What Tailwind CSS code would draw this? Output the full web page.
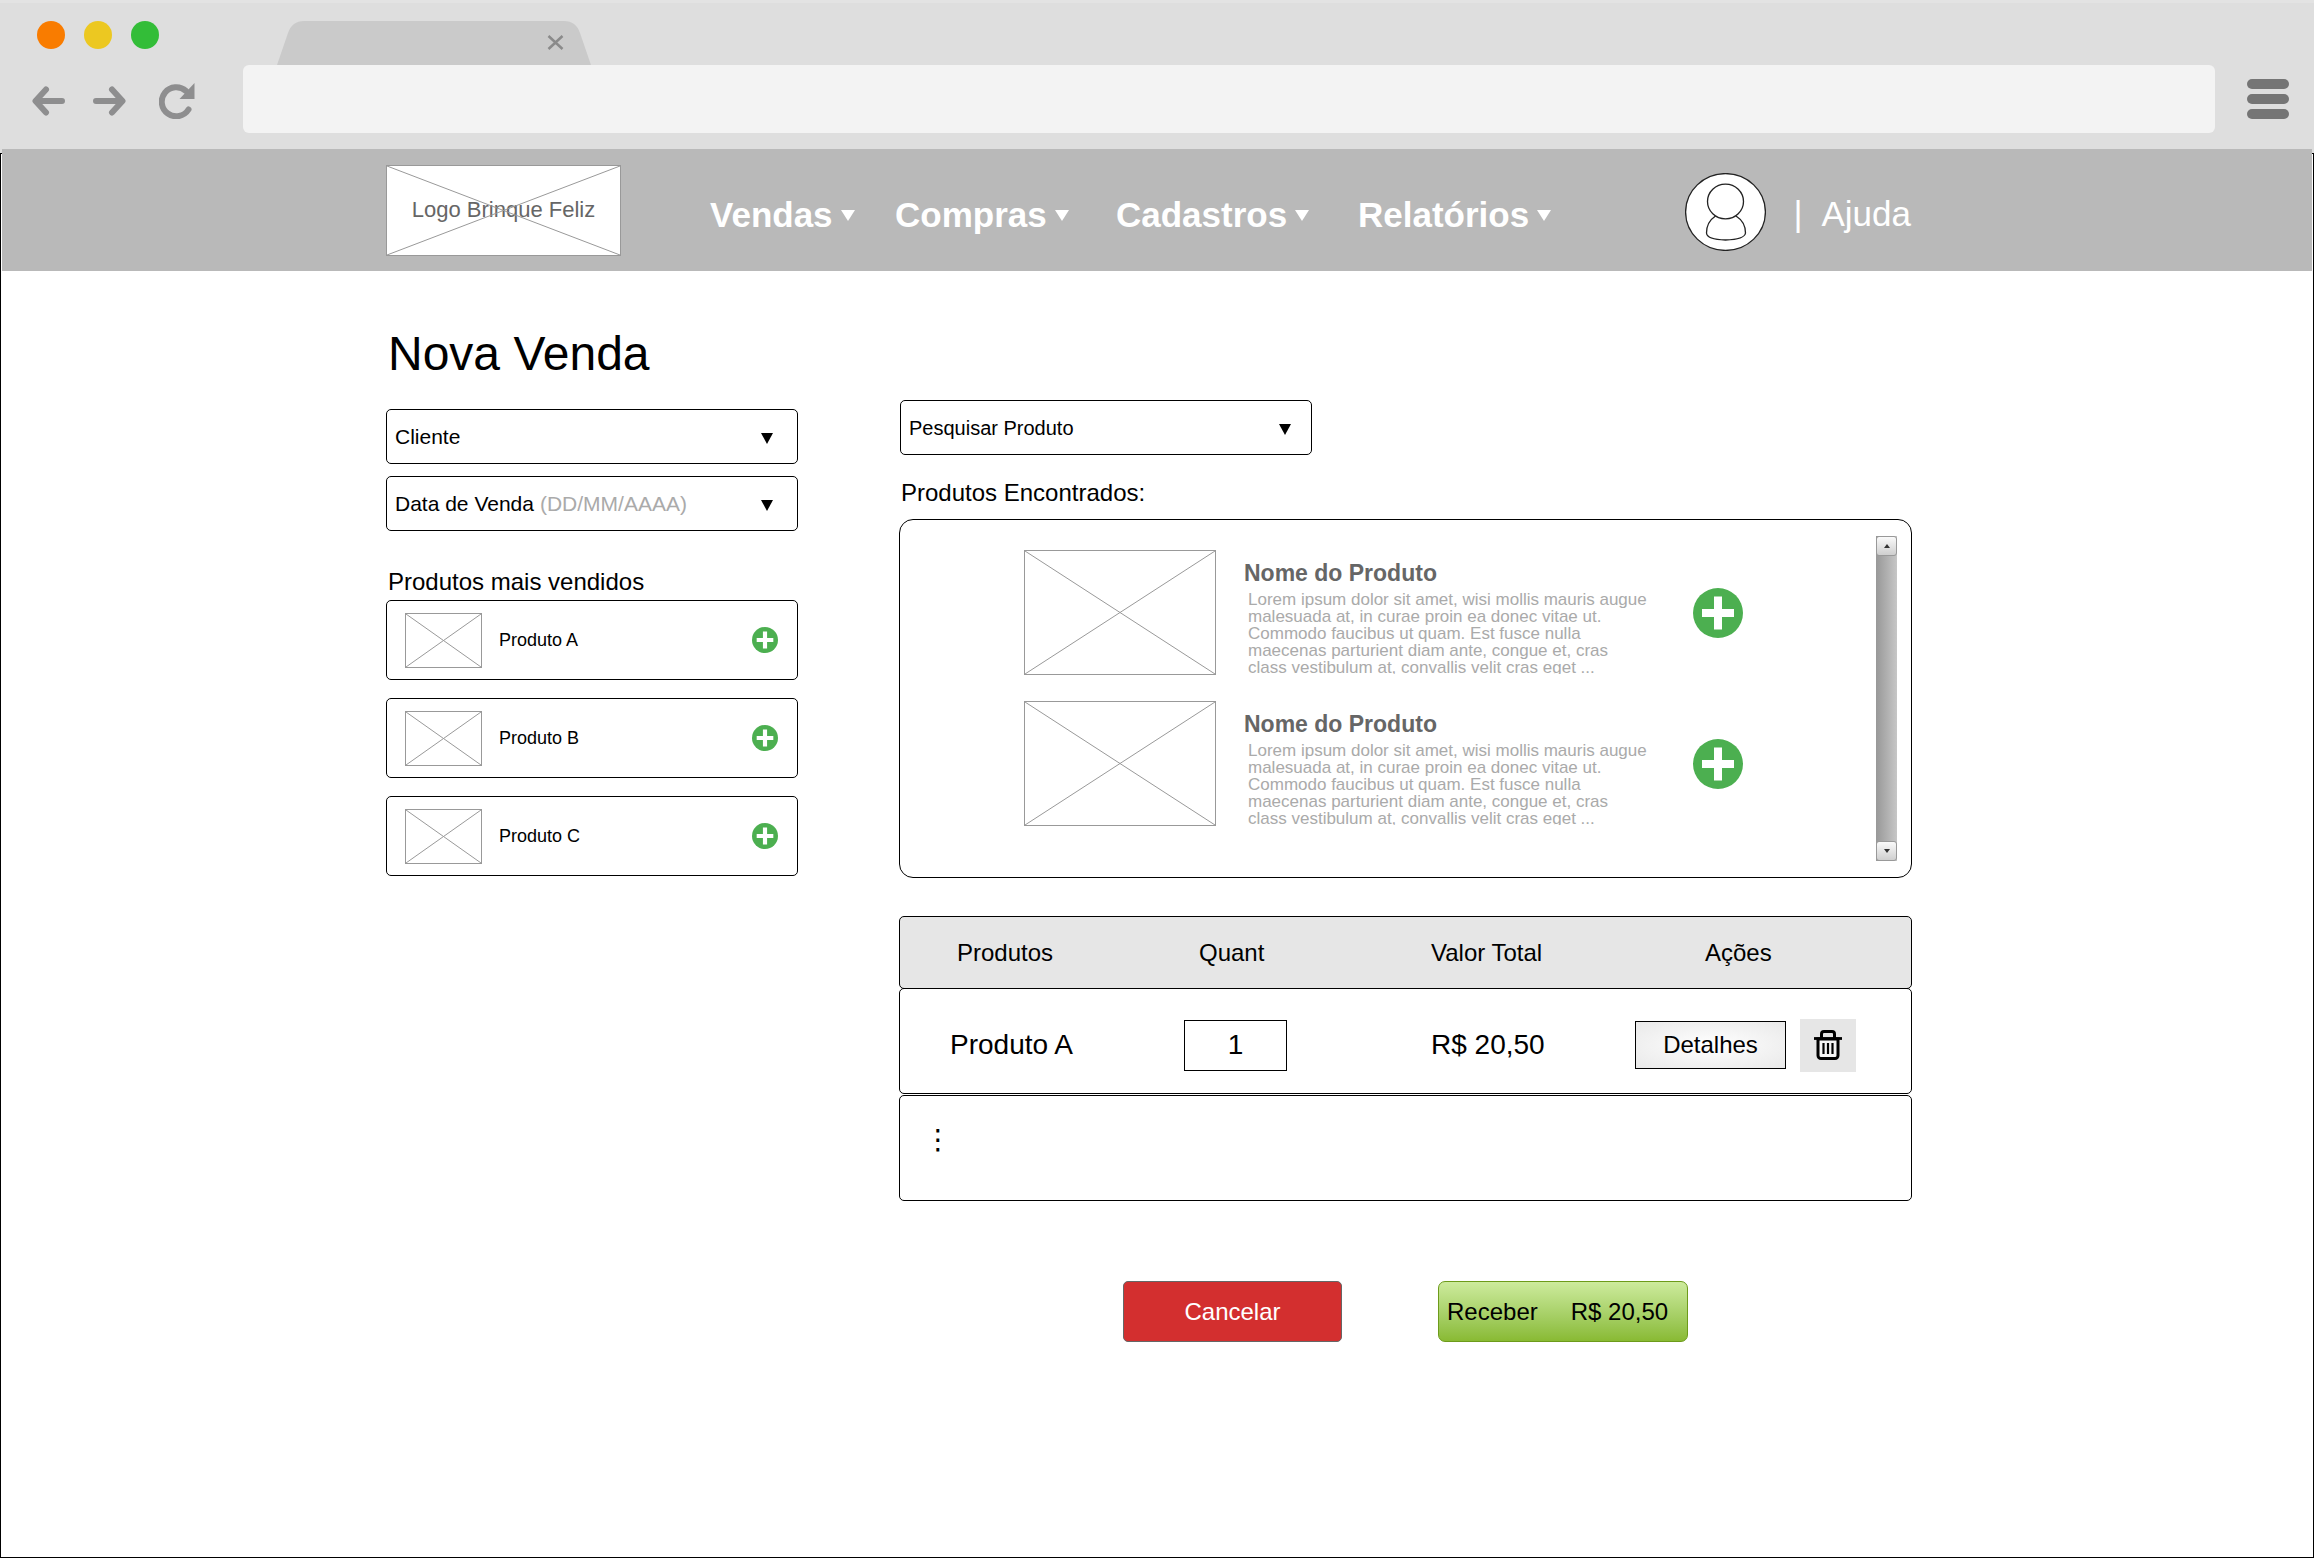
<!DOCTYPE html>
<html lang="pt-BR">
<head>
<meta charset="utf-8">
<meta name="viewport" content="width=device-width, initial-scale=1">
<title>Nova Venda</title>
<script src="https://cdn.jsdelivr.net/npm/@tailwindcss/browser@4"></script>
</head>
<body class="flex min-h-screen flex-col bg-white pr-px pb-px font-['Liberation_Sans',Arial,sans-serif] text-black">

<!-- Shared symbols -->
<svg class="hidden" aria-hidden="true">
  <symbol id="plus" viewBox="0 0 50 50">
    <circle cx="25" cy="25" r="25" fill="#4caf50"/>
    <path d="M25 8.500v33M9 25h32" stroke="#fff" stroke-width="8" fill="none"/>
  </symbol>
  <symbol id="caret" viewBox="0 0 12 11" preserveAspectRatio="none">
    <path d="M0 0h12L6 11z" fill="currentColor"/>
  </symbol>
</svg>

<!-- Browser bar -->
<div class="h-[153px] border-t-3 border-[#e3e3e3] bg-[#dedede]">
  <div class="flex h-[62px] items-start pt-[18px] pl-[37px]">
    <div class="flex gap-[19px]">
      <span class="size-7 rounded-full bg-[#f97c00]"></span>
      <span class="size-7 rounded-full bg-[#ecc821]"></span>
      <span class="size-7 rounded-full bg-[#33bd38]"></span>
    </div>
    <svg class="ml-[118px] h-[44px] w-[314px]" viewBox="0 0 314 44" aria-hidden="true">
      <path d="M0 44L11 12Q15 0 27 0H287Q299 0 303 12L314 44z" fill="#cacaca"/>
      <path d="M271.500 15l14 13M285.500 15l-14 13" stroke="#8a8a8a" stroke-width="2.500" fill="none"/>
    </svg>
  </div>
  <div class="flex items-center pr-[25px] pl-8">
    <div class="flex items-center gap-7 pt-1 text-[#8e8e8f]">
      <button type="button" aria-label="Voltar">
        <svg class="h-[30px] w-[33px]" viewBox="0 0 33 30" fill="none" stroke="currentColor" stroke-width="6" stroke-linecap="round" stroke-linejoin="round"><path d="M30 15H4M14 3.500L3.500 15L14 26.500"/></svg>
      </button>
      <button type="button" aria-label="Avançar">
        <svg class="h-[30px] w-[33px]" viewBox="0 0 33 30" fill="none" stroke="currentColor" stroke-width="6" stroke-linecap="round" stroke-linejoin="round"><path d="M3 15h26M19 3.500L29.500 15L19 26.500"/></svg>
      </button>
      <button type="button" aria-label="Recarregar" class="ml-[5px]">
        <svg class="h-[36px] w-[36px]" viewBox="0 0 36 36" fill="none" stroke="currentColor" stroke-width="6"><path d="M29.500 26.500A14.500 14.500 0 1 1 27 8" stroke-linecap="round"/><path d="M35.500 0v16H20.500z" fill="currentColor" stroke="none"/></svg>
      </button>
    </div>
    <input type="text" aria-label="Endereço" class="ml-12 h-[68px] min-w-0 flex-1 rounded-md bg-[#f3f3f3] px-4 text-2xl outline-none">
    <button type="button" aria-label="Menu" class="ml-8 flex w-[42px] flex-col gap-[5px]">
      <span class="h-[10px] rounded-full bg-[#757575]"></span>
      <span class="h-[10px] rounded-full bg-[#757575]"></span>
      <span class="h-[10px] rounded-full bg-[#757575]"></span>
    </button>
  </div>
</div>

<!-- Page -->
<div class="flex-1 border border-black">
  <header class="relative mx-px -mt-[5px] bg-[#b9b9b9] pr-4">
    <div class="mx-auto flex min-h-[122px] max-w-[1526px] items-center">
      <a href="#" class="grid h-[91px] w-[235px] place-items-center bg-white">
        <span class="text-[22px] leading-6 text-[#666] [grid-area:1/1]">Logo Brinque Feliz</span>
        <svg class="size-full border border-[#999] [grid-area:1/1]" viewBox="0 0 100 100" preserveAspectRatio="none" aria-hidden="true"><path d="M0 0L100 100M100 0L0 100" stroke="#999" fill="none" vector-effect="non-scaling-stroke"/></svg>
      </a>
      <nav class="ml-[89px] grid grid-cols-[185px_221px_242px_auto] justify-items-start pt-[10px] text-[35px] leading-10 font-bold text-white">
        <button type="button" class="flex items-center gap-2">Vendas<svg class="h-[11px] w-[14px]" aria-hidden="true"><use href="#caret"/></svg></button>
        <button type="button" class="flex items-center gap-2">Compras<svg class="h-[11px] w-[14px]" aria-hidden="true"><use href="#caret"/></svg></button>
        <button type="button" class="flex items-center gap-2">Cadastros<svg class="h-[11px] w-[14px]" aria-hidden="true"><use href="#caret"/></svg></button>
        <button type="button" class="flex items-center gap-2">Relatórios<svg class="h-[11px] w-[14px]" aria-hidden="true"><use href="#caret"/></svg></button>
      </nav>
      <div class="ml-auto flex items-center pt-1 pr-px text-[35px] leading-10 text-white">
        <button type="button" aria-label="Minha conta">
          <svg class="h-[78px] w-[81px]" viewBox="0 0 81 78" fill="#fff" stroke="#222" stroke-width="1.300">
            <ellipse cx="40.500" cy="39" rx="39.900" ry="38.400"/>
            <path d="M30.500 43Q21.500 49 21.500 60Q22 66.500 40.500 67Q59.500 66.500 60.500 60Q60.500 49 51 43"/>
            <ellipse cx="40.500" cy="28.500" rx="18" ry="17.300"/>
          </svg>
        </button>
        <span class="ml-[27px] pt-1">|</span>
        <a href="#" class="ml-[19px] pt-1">Ajuda</a>
      </div>
    </div>
  </header>

  <main class="pr-4 pb-12">
    <div class="mx-auto grid max-w-[1526px] grid-cols-[412px_minmax(0,1fr)] gap-x-[101px]">

      <section class="pt-[55px]">
        <h1 class="pl-0.5 text-[48px] leading-[56px]">Nova Venda</h1>

        <div class="mt-[27px] grid items-center">
          <select aria-label="Cliente" class="h-[55px] w-full appearance-none rounded-[5px] border border-black bg-white pr-12 pl-2 text-[21px] [grid-area:1/1]">
            <option>Cliente</option>
          </select>
          <svg class="pointer-events-none mt-1 mr-[25px] h-[11px] w-3 justify-self-end [grid-area:1/1]" aria-hidden="true"><use href="#caret"/></svg>
        </div>

        <div class="mt-3 flex h-[55px] items-center gap-[6px] rounded-[5px] border border-black pr-6 pl-2 text-[21px]">
          <label for="data" class="whitespace-nowrap">Data de Venda</label>
          <input id="data" type="text" placeholder="(DD/MM/AAAA)" class="min-w-0 flex-1 outline-none placeholder:text-[#aaa]">
          <button type="button" aria-label="Abrir calendário" class="pt-1"><svg class="h-[11px] w-3" aria-hidden="true"><use href="#caret"/></svg></button>
        </div>

        <h2 class="mt-[37px] mb-1 pl-0.5 text-2xl leading-7">Produtos mais vendidos</h2>
        <ul class="flex flex-col gap-[18px]">
          <li class="flex h-20 items-center rounded-[5px] border border-black pr-[19px] pl-[18px]">
            <svg class="h-[55px] w-[77px] border border-[#999]" viewBox="0 0 100 100" preserveAspectRatio="none" aria-hidden="true"><path d="M0 0L100 100M100 0L0 100" stroke="#999" fill="none" vector-effect="non-scaling-stroke"/></svg>
            <span class="ml-[17px] flex-1 text-lg leading-6">Produto A</span>
            <button type="button" aria-label="Adicionar Produto A"><svg class="size-[26px]"><use href="#plus"/></svg></button>
          </li>
          <li class="flex h-20 items-center rounded-[5px] border border-black pr-[19px] pl-[18px]">
            <svg class="h-[55px] w-[77px] border border-[#999]" viewBox="0 0 100 100" preserveAspectRatio="none" aria-hidden="true"><path d="M0 0L100 100M100 0L0 100" stroke="#999" fill="none" vector-effect="non-scaling-stroke"/></svg>
            <span class="ml-[17px] flex-1 text-lg leading-6">Produto B</span>
            <button type="button" aria-label="Adicionar Produto B"><svg class="size-[26px]"><use href="#plus"/></svg></button>
          </li>
          <li class="flex h-20 items-center rounded-[5px] border border-black pr-[19px] pl-[18px]">
            <svg class="h-[55px] w-[77px] border border-[#999]" viewBox="0 0 100 100" preserveAspectRatio="none" aria-hidden="true"><path d="M0 0L100 100M100 0L0 100" stroke="#999" fill="none" vector-effect="non-scaling-stroke"/></svg>
            <span class="ml-[17px] flex-1 text-lg leading-6">Produto C</span>
            <button type="button" aria-label="Adicionar Produto C"><svg class="size-[26px]"><use href="#plus"/></svg></button>
          </li>
        </ul>
      </section>

      <section class="pt-[129px]">
        <div class="ml-px grid w-[412px] items-center">
          <select aria-label="Pesquisar Produto" class="h-[55px] w-full appearance-none rounded-[5px] border border-black bg-white pr-12 pl-2 text-[20px] [grid-area:1/1]">
            <option>Pesquisar Produto</option>
          </select>
          <svg class="pointer-events-none mt-1 mr-[21px] h-[11px] w-3 justify-self-end [grid-area:1/1]" aria-hidden="true"><use href="#caret"/></svg>
        </div>

        <h2 class="mt-6 mb-3 pl-0.5 text-2xl leading-7">Produtos Encontrados:</h2>
        <div class="flex rounded-[14px] border border-black">
          <ul class="flex flex-1 flex-col gap-[26px] pt-[30px] pb-[51px] pl-[124px]">
            <li class="flex items-center">
              <svg class="h-[125px] w-[192px] shrink-0 border border-[#999]" viewBox="0 0 100 100" preserveAspectRatio="none" aria-hidden="true"><path d="M0 0L100 100M100 0L0 100" stroke="#999" fill="none" vector-effect="non-scaling-stroke"/></svg>
              <div class="ml-7 self-start pt-[9px]">
                <h3 class="text-[23px] leading-7 font-bold text-[#666]">Nome do Produto</h3>
                <p class="mt-1 ml-1 h-[83px] w-[402px] overflow-hidden text-[17px] leading-[17px] text-[#aaa]">Lorem ipsum dolor sit amet, wisi mollis mauris augue malesuada at, in curae proin ea donec vitae ut. Commodo faucibus ut quam. Est fusce nulla maecenas parturient diam ante, congue et, cras class vestibulum at, convallis velit cras eget ...</p>
              </div>
              <button type="button" aria-label="Adicionar produto" class="ml-[43px]"><svg class="size-[50px]"><use href="#plus"/></svg></button>
            </li>
            <li class="flex items-center">
              <svg class="h-[125px] w-[192px] shrink-0 border border-[#999]" viewBox="0 0 100 100" preserveAspectRatio="none" aria-hidden="true"><path d="M0 0L100 100M100 0L0 100" stroke="#999" fill="none" vector-effect="non-scaling-stroke"/></svg>
              <div class="ml-7 self-start pt-[9px]">
                <h3 class="text-[23px] leading-7 font-bold text-[#666]">Nome do Produto</h3>
                <p class="mt-1 ml-1 h-[83px] w-[402px] overflow-hidden text-[17px] leading-[17px] text-[#aaa]">Lorem ipsum dolor sit amet, wisi mollis mauris augue malesuada at, in curae proin ea donec vitae ut. Commodo faucibus ut quam. Est fusce nulla maecenas parturient diam ante, congue et, cras class vestibulum at, convallis velit cras eget ...</p>
              </div>
              <button type="button" aria-label="Adicionar produto" class="ml-[43px]"><svg class="size-[50px]"><use href="#plus"/></svg></button>
            </li>
          </ul>
          <div class="my-4 mr-[14px] flex w-[21px] flex-col bg-linear-to-r from-[#989898] to-[#c6c6c6]">
            <button type="button" aria-label="Rolar para cima" class="flex h-5 items-center justify-center rounded-[3px] border border-[#999] bg-linear-to-b from-[#fafafa] to-[#cfcfcf]"><svg class="h-1 w-[6px]" viewBox="0 0 6 4"><path d="M0 4h6L3 0z" fill="#333"/></svg></button>
            <button type="button" aria-label="Rolar para baixo" class="mt-auto flex h-5 items-center justify-center rounded-[3px] border border-[#999] bg-linear-to-b from-[#fafafa] to-[#cfcfcf]"><svg class="h-1 w-[6px]" viewBox="0 0 6 4"><path d="M0 0h6L3 4z" fill="#333"/></svg></button>
          </div>
        </div>

        <table class="mt-[38px] block w-full">
          <thead class="block text-2xl">
            <tr class="-mb-px grid h-[73px] grid-cols-[284fr_247fr_204fr_276fr] items-center rounded-[5px] border border-black bg-[#e6e6e6] text-left">
              <th scope="col" class="pl-[57px] font-normal">Produtos</th>
              <th scope="col" class="pl-[15px] font-normal">Quant</th>
              <th scope="col" class="font-normal">Valor Total</th>
              <th scope="col" class="pl-[70px] font-normal">Ações</th>
            </tr>
          </thead>
          <tbody class="flex flex-col gap-px">
            <tr class="grid h-[106px] grid-cols-[284fr_247fr_204fr_276fr] items-center rounded-[5px] border border-black pt-2 text-[28px] leading-8">
              <td class="pl-[50px]">Produto A</td>
              <td><input type="text" inputmode="numeric" aria-label="Quantidade" value="1" class="block h-[51px] w-[103px] border border-black text-center outline-none"></td>
              <td>R$ 20,50</td>
              <td class="flex items-center gap-[14px]">
                <button type="button" class="h-12 w-[151px] border border-black bg-radial from-white to-[#e9e9e9] text-2xl">Detalhes</button>
                <button type="button" aria-label="Excluir" class="flex h-[53px] w-14 items-center justify-center bg-[#e6e6e6]">
                  <svg class="h-[30px] w-7" viewBox="0 0 28 30" fill="none" stroke="#000">
                    <path d="M4 9h20v16.500a3 3 0 0 1-3 3H7a3 3 0 0 1-3-3z" fill="#f4f4f4" stroke-width="3"/>
                    <path d="M7.500 8V4q0-2.500 2.500-2.500h8q2.500 0 2.500 2.500v4" stroke-width="3"/>
                    <path d="M0 8.500h28" stroke-width="2.800"/>
                    <path d="M9.500 13v11M14 13v11M18.500 13v11" stroke-width="2.200"/>
                  </svg>
                </button>
              </td>
            </tr>
            <tr class="grid h-[106px] rounded-[5px] border border-black text-[28px] leading-8">
              <td class="pt-7 pl-6 font-['DejaVu_Sans',sans-serif]">⋮</td>
            </tr>
          </tbody>
        </table>

        <div class="mt-20 flex justify-center gap-24 text-2xl">
          <button type="button" class="h-[61px] w-[219px] rounded-[5px] border border-[#666] bg-[#d32f2f] text-white">Cancelar</button>
          <button type="button" class="flex h-[61px] w-[250px] items-center gap-[33px] rounded-[7px] border border-[#6d9b1a] bg-linear-to-b from-[#cdeb9c] to-[#89ba32] pl-2"><span>Receber</span><span>R$ 20,50</span></button>
        </div>
      </section>
    </div>
  </main>
</div>
</body>
</html>
